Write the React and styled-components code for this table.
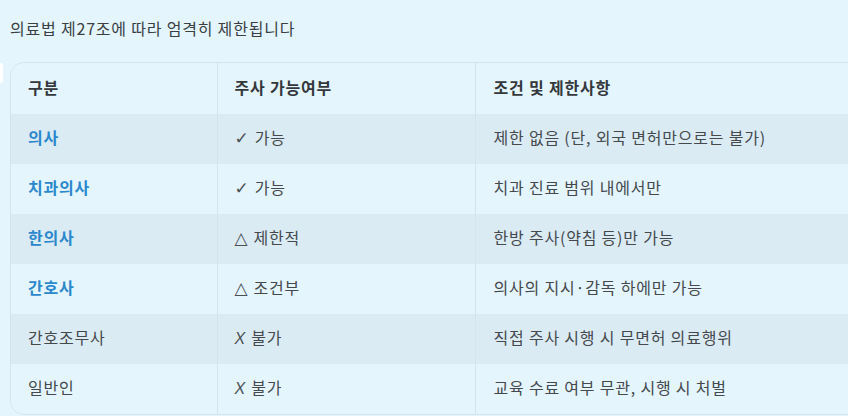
import React from 'react';
import styled, { createGlobalStyle } from 'styled-components';

const GlobalStyle = createGlobalStyle`
  html, body {
    margin: 0;
    padding: 0;
    background: #e4f5fd;
    overflow: hidden;
  }
  body {
    font-family: "Noto Sans CJK KR", "Noto Sans", sans-serif;
    letter-spacing: 0.8px;
  }
`;

const Page = styled.div`
  position: relative;
  width: 848px;
  height: 416px;
  padding: 0 0 0 10px;
  box-sizing: border-box;
  background: #e4f5fd;
  overflow: hidden;
`;

const Intro = styled.p`
  margin: 0;
  padding: 17px 0 0 0;
  height: 44px;
  box-sizing: border-box;
  font-size: 16px;
  line-height: 22px;
  color: #3b3f44;
`;

const Edge = styled.div`
  position: absolute;
  left: 0;
  top: 63px;
  width: 3px;
  height: 20px;
  background: #ffffff;
  border-radius: 0 2px 2px 0;
`;

const TableWrap = styled.div`
  margin-top: 18px;
  width: 960px;
  border: 1px solid #d3e4ec;
  border-radius: 14px;
  overflow: hidden;
`;

const Table = styled.table`
  width: 100%;
  border-collapse: collapse;
  table-layout: fixed;
`;

const Row = styled.tr`
  height: ${(p) => (p.$head ? '51px' : '50px')};
  background: ${(p) => (p.$shade ? '#dbebf4' : '#e4f5fd')};
`;

const Cell = styled.td`
  padding: 0 0 4px 17px;
  font-size: 16px;
  color: #45494e;
  vertical-align: middle;
  border-left: 1px solid #d5e3ea;
  white-space: nowrap;
  &:first-child {
    border-left: none;
  }
  &:nth-child(3) {
    padding-left: 18px;
  }
`;

const HeadCell = styled(Cell).attrs({ as: 'th' })`
  text-align: left;
  font-weight: 700;
  color: #34383d;
`;

const Role = styled(Cell)`
  font-weight: ${(p) => (p.$strong ? 700 : 400)};
  color: ${(p) => (p.$strong ? '#2b88cc' : '#45494e')};
`;

const Mark = styled.span`
  font-family: ${(p) => (p.$x ? '"Liberation Sans"' : '"DejaVu Sans"')}, sans-serif;
  font-style: ${(p) => (p.$x ? 'italic' : 'normal')};
  font-size: ${(p) => (p.$x ? '16px' : '17px')};
  letter-spacing: 0;
  margin-right: 6px;
  color: #4a4f55;
`;

const rows = [
  { role: '의사', strong: true, mark: '✓', ok: '가능', note: '제한 없음 (단, 외국 면허만으로는 불가)' },
  { role: '치과의사', strong: true, mark: '✓', ok: '가능', note: '치과 진료 범위 내에서만' },
  { role: '한의사', strong: true, mark: '△', ok: '제한적', note: '한방 주사(약침 등)만 가능' },
  { role: '간호사', strong: true, mark: '△', ok: '조건부', note: '의사의 지시·감독 하에만 가능' },
  { role: '간호조무사', strong: false, mark: 'X', ok: '불가', note: '직접 주사 시행 시 무면허 의료행위' },
  { role: '일반인', strong: false, mark: 'X', ok: '불가', note: '교육 수료 여부 무관, 시행 시 처벌' },
];

export default function App() {
  return (
    <>
      <GlobalStyle />
      <Page>
        <Edge />
        <Intro>의료법 제27조에 따라 엄격히 제한됩니다</Intro>
        <TableWrap>
          <Table>
            <colgroup>
              <col style={{ width: 206 }} />
              <col style={{ width: 258 }} />
              <col />
            </colgroup>
            <thead>
              <Row $head>
                <HeadCell>구분</HeadCell>
                <HeadCell>주사 가능여부</HeadCell>
                <HeadCell>조건 및 제한사항</HeadCell>
              </Row>
            </thead>
            <tbody>
              {rows.map((r, i) => (
                <Row key={r.role} $shade={i % 2 === 0}>
                  <Role $strong={r.strong}>{r.role}</Role>
                  <Cell>
                    <Mark $x={r.mark === 'X'}>{r.mark}</Mark>
                    {r.ok}
                  </Cell>
                  <Cell>{r.note}</Cell>
                </Row>
              ))}
            </tbody>
          </Table>
        </TableWrap>
      </Page>
    </>
  );
}
